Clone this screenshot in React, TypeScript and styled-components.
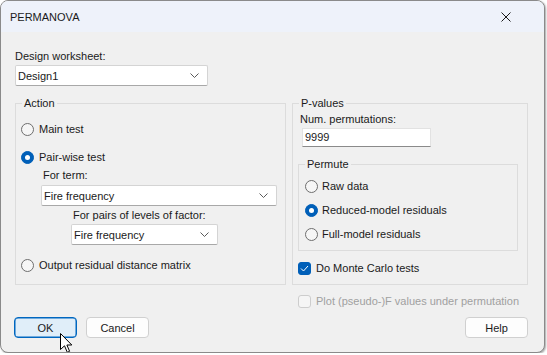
import styled, { createGlobalStyle } from "styled-components";

const GlobalStyle = createGlobalStyle`
  body {
    margin: 0;
    background: #ffffff;
    font-family: "Liberation Sans", Arial, sans-serif;
    font-size: 11px;
    color: #1a1a1a;
  }
`;

const Dialog = styled.div`
  position: relative;
  box-sizing: border-box;
  width: 545px;
  height: 353px;
  border: 1px solid #8a8a8a;
  border-radius: 8px;
  overflow: hidden;
  background: #f0f0f0;
  box-shadow: 1px 1px 2px rgba(0, 0, 0, 0.35);
  display: flex;
  flex-direction: column;
`;

const TitleBar = styled.div`
  height: 31px;
  flex: none;
  background: #eef2fa;
  display: flex;
  align-items: center;
  justify-content: space-between;
  padding: 0 33px 0 9px;
  font-size: 11px;
`;

const Body = styled.div`
  flex: 1;
  padding: 16px 16px 0 14px;
  display: flex;
  flex-direction: column;
`;

const Label = styled.div<{ $indent?: number; $top?: number }>`
  height: 16px;
  line-height: 16px;
  margin-left: ${(p) => p.$indent ?? 0}px;
  margin-top: ${(p) => p.$top ?? 0}px;
  white-space: nowrap;
`;

const Combo = styled.div<{ $width: number; $indent?: number; $top?: number }>`
  box-sizing: border-box;
  width: ${(p) => p.$width}px;
  height: 21px;
  margin-left: ${(p) => p.$indent ?? 0}px;
  margin-top: ${(p) => p.$top ?? 0}px;
  background: #ffffff;
  border: 1px solid #d4d4d4;
  border-bottom-color: #a8a8a8;
  border-radius: 2px;
  display: flex;
  align-items: center;
  justify-content: space-between;
  padding: 0 8px 0 2px;
`;

const TextInput = styled.div`
  box-sizing: border-box;
  width: 129px;
  height: 19px;
  margin: 1px 0 0 9px;
  background: #ffffff;
  border: 1px solid #e2e2e2;
  border-bottom-color: #8a8a8a;
  padding: 0 2px;
  line-height: 17px;
`;

const Columns = styled.div`
  display: grid;
  grid-template-columns: 271px 236px;
  column-gap: 6px;
`;

const GroupRow = styled(Columns)`
  margin-top: 9px;
  align-items: stretch;
`;

const Group = styled.fieldset<{ $pad?: number; $indent?: number; $top?: number }>`
  margin: ${(p) => p.$top ?? 0}px 0 0 ${(p) => p.$indent ?? 0}px;
  padding: 0 0 ${(p) => p.$pad ?? 0}px 0;
  min-width: 0;
  border: 1px solid #dcdcdc;
  display: flex;
  flex-direction: column;
`;

const SubGroup = styled(Group)`
  box-sizing: border-box;
  width: 220px;
`;

const Legend = styled.legend`
  margin-left: 6px;
  padding: 0 2px;
  height: 16px;
  line-height: 16px;
`;

const OptionRow = styled.div<{ $indent?: number; $top?: number; $disabled?: boolean; $gap?: number }>`
  display: flex;
  align-items: center;
  gap: ${(p) => p.$gap ?? 5}px;
  height: 16px;
  margin-left: ${(p) => p.$indent ?? 0}px;
  margin-top: ${(p) => p.$top ?? 0}px;
  color: ${(p) => (p.$disabled ? "#a0a0a0" : "#1a1a1a")};
  white-space: nowrap;
`;

const Radio = styled.span<{ $checked?: boolean }>`
  box-sizing: border-box;
  width: 13px;
  height: 13px;
  flex: none;
  border-radius: 50%;
  display: flex;
  align-items: center;
  justify-content: center;
  background: ${(p) => (p.$checked ? "#005fb8" : "#f6f6f6")};
  border: 1px solid ${(p) => (p.$checked ? "#005fb8" : "#6e6e6e")};
  &::after {
    content: "";
    display: ${(p) => (p.$checked ? "block" : "none")};
    width: 5px;
    height: 5px;
    border-radius: 50%;
    background: #ffffff;
  }
`;

const Check = styled.span<{ $checked?: boolean; $disabled?: boolean }>`
  box-sizing: border-box;
  width: 13px;
  height: 13px;
  flex: none;
  border-radius: 3px;
  display: flex;
  align-items: center;
  justify-content: center;
  background: ${(p) => (p.$checked ? "#005fb8" : "#f5f5f5")};
  border: 1px solid
    ${(p) => (p.$checked ? "#005fb8" : p.$disabled ? "#cdcdcd" : "#6e6e6e")};
`;

const FooterCheck = styled(Columns)`
  margin-top: 8px;
`;

const Buttons = styled.div`
  display: flex;
  align-items: center;
  margin-top: 8px;
  margin-left: -1px;
  gap: 9px;
`;

const Button = styled.div<{ $default?: boolean }>`
  box-sizing: border-box;
  width: 63px;
  height: 21px;
  border-radius: 4px;
  display: flex;
  align-items: center;
  justify-content: center;
  background: ${(p) => (p.$default ? "#e0eef9" : "#fdfdfd")};
  border: 1px solid ${(p) => (p.$default ? "#0067c0" : "#d0d0d0")};
  box-shadow: ${(p) => (p.$default ? "inset 0 0 0 0.5px #0067c0" : "none")};
  &:last-child {
    margin-left: auto;
  }
`;

const Pointer = styled.svg`
  position: absolute;
  left: 59px;
  top: 332px;
`;

function Chevron() {
  return (
    <svg width="9" height="5" viewBox="0 0 9 5">
      <path d="M0.5 0.5 L4.5 4.5 L8.5 0.5" fill="none" stroke="#5a5a5a" strokeWidth="1" />
    </svg>
  );
}

function Tick() {
  return (
    <svg width="9" height="7" viewBox="0 0 9 7">
      <path d="M1 3.5 L3.5 6 L8 1" fill="none" stroke="#ffffff" strokeWidth="1" />
    </svg>
  );
}

export default function App() {
  return (
    <>
      <GlobalStyle />
      <Dialog>
        <TitleBar>
          <span>PERMANOVA</span>
          <svg width="10" height="10" viewBox="0 0 10 10">
            <path d="M0.5 0.5 L9.5 9.5 M9.5 0.5 L0.5 9.5" stroke="#1a1a1a" strokeWidth="1" />
          </svg>
        </TitleBar>
        <Body>
          <Label>Design worksheet:</Label>
          <Combo $width={193} $top={1}>
            <span>Design1</span>
            <Chevron />
          </Combo>

          <GroupRow>
            <Group $pad={11}>
              <Legend>Action</Legend>
              <OptionRow $indent={5} $top={10}>
                <Radio />
                Main test
              </OptionRow>
              <OptionRow $indent={5} $top={12}>
                <Radio $checked />
                Pair-wise test
              </OptionRow>
              <Label $indent={27} $top={2}>For term:</Label>
              <Combo $width={236} $indent={25} $top={2}>
                <span>Fire frequency</span>
                <Chevron />
              </Combo>
              <Label $indent={57} $top={1}>For pairs of levels of factor:</Label>
              <Combo $width={147} $indent={55} $top={1}>
                <span>Fire frequency</span>
                <Chevron />
              </Combo>
              <OptionRow $indent={5} $top={12}>
                <Radio />
                Output residual distance matrix
              </OptionRow>
            </Group>

            <Group>
              <Legend>P-values</Legend>
              <Label $indent={7}>Num. permutations:</Label>
              <TextInput>9999</TextInput>
              <SubGroup $indent={5} $top={9} $pad={8}>
                <Legend>Permute</Legend>
                <OptionRow $indent={6} $top={6} $gap={4}>
                  <Radio />
                  Raw data
                </OptionRow>
                <OptionRow $indent={6} $top={8} $gap={4}>
                  <Radio $checked />
                  Reduced-model residuals
                </OptionRow>
                <OptionRow $indent={6} $top={8} $gap={4}>
                  <Radio />
                  Full-model residuals
                </OptionRow>
              </SubGroup>
              <OptionRow $indent={5} $top={9}>
                <Check $checked>
                  <Tick />
                </Check>
                Do Monte Carlo tests
              </OptionRow>
            </Group>
          </GroupRow>

          <FooterCheck>
            <span />
            <OptionRow $indent={6} $disabled>
              <Check $disabled />
              Plot (pseudo-)F values under permutation
            </OptionRow>
          </FooterCheck>

          <Buttons>
            <Button $default>OK</Button>
            <Button>Cancel</Button>
            <Button>Help</Button>
          </Buttons>
        </Body>
        <Pointer width="14" height="21" viewBox="0 0 14 21">
          <path
            d="M0.5 0.5 L0.5 16.5 L4.5 12.8 L7.3 19.3 L9.6 18.3 L6.9 12 L11.8 12 Z"
            fill="#ffffff"
            stroke="#000000"
            strokeWidth="1"
            strokeLinejoin="round"
          />
        </Pointer>
      </Dialog>
    </>
  );
}
